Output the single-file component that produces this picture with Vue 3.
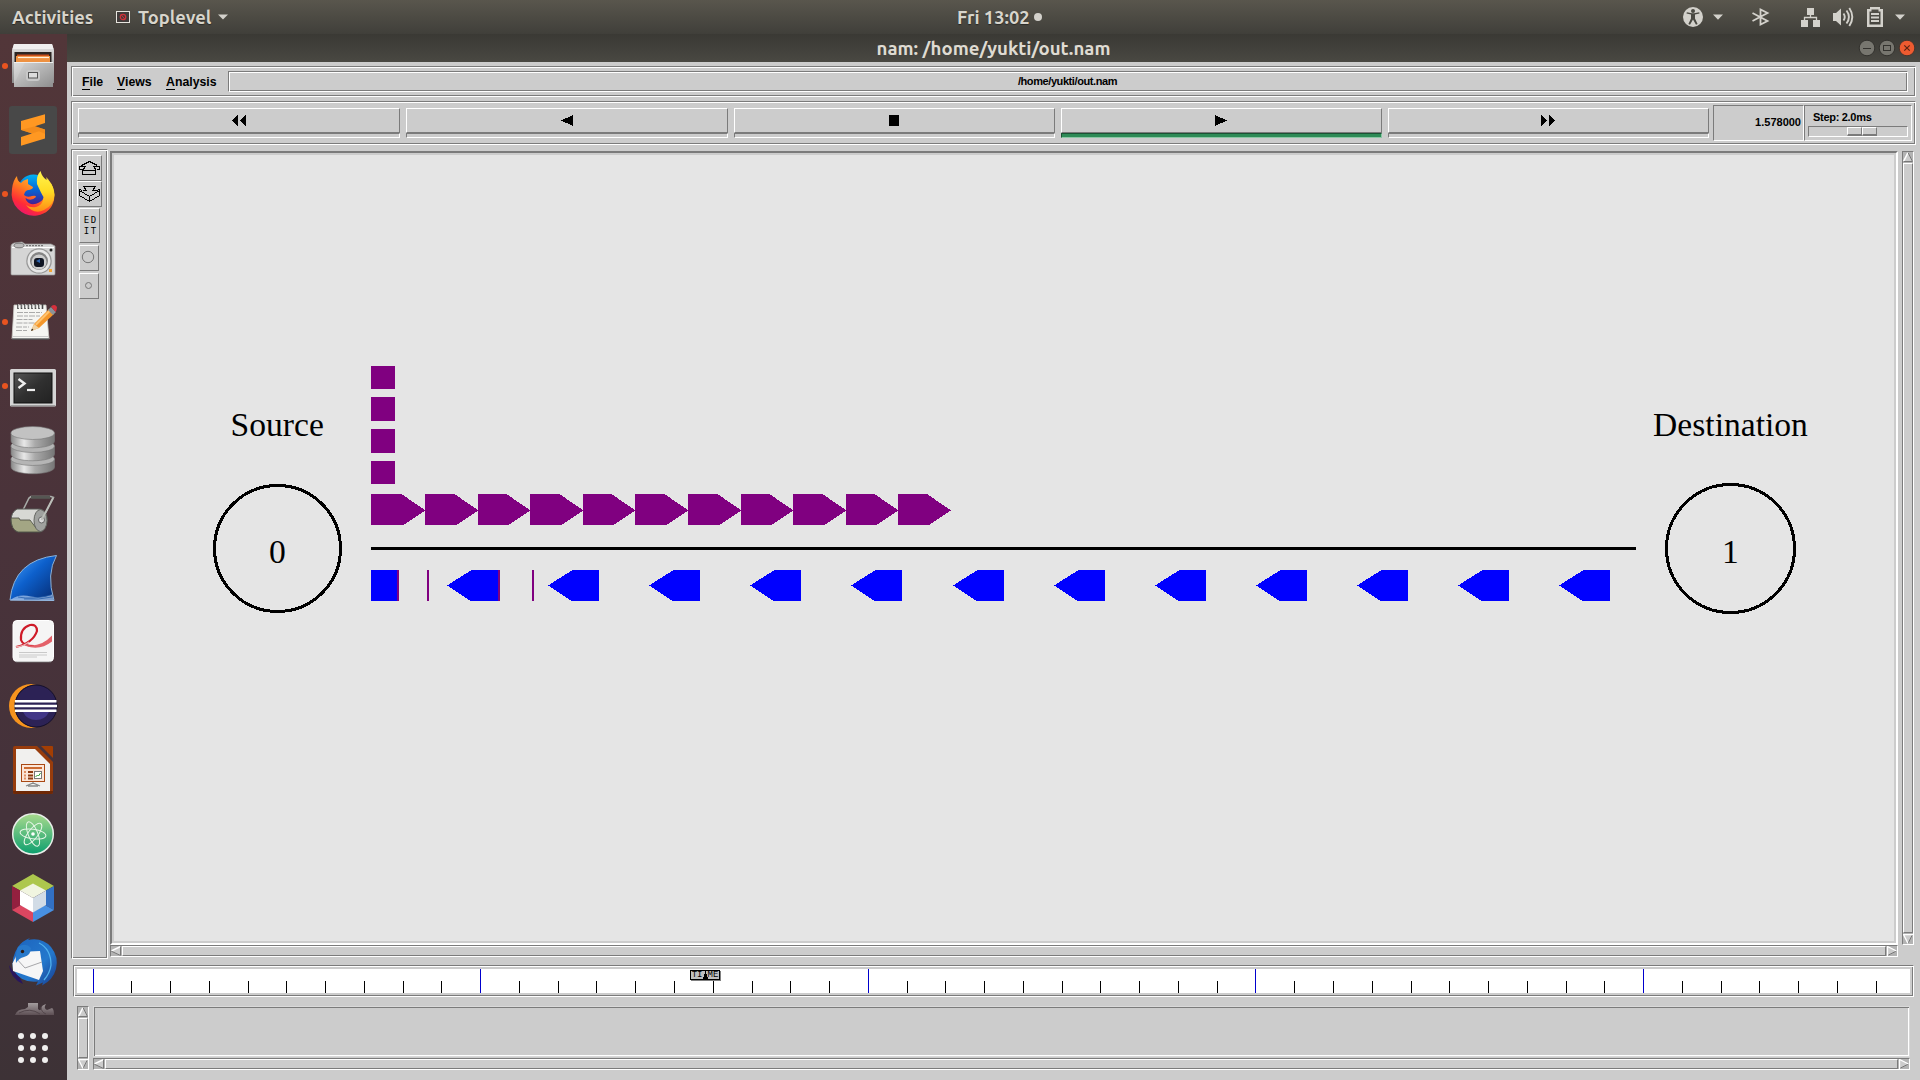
<script setup>
const purpleStarts = [371, 425, 478, 530, 583, 635, 688, 741, 793, 846, 898]
const forward = purpleStarts.map((x, i) => {
  const end = i < 10 ? purpleStarts[i + 1] + 0.5 : 951
  return `${x},494 ${end - 24},494 ${end},510.5 ${end - 22},525 ${x},525`
})
const backward = Array.from({ length: 12 }, (_, k) => {
  const r = Math.round(498 + 101.1 * k)
  const tip = r - 51
  return `${r},570 ${r - 26.5},570 ${tip},585.5 ${r - 27.5},601 ${r},601`
})
const queue = [[366, 23], [397, 24], [429, 24], [461, 23]]
const edges = [397, 427, 498, 532]
const ticks = Array.from({ length: 47 }, (_, i) => ({
  x: Math.floor(93 + 38.765 * i) - 77,
  major: i % 10 === 0,
}))
const controls = ['rewind', 'back', 'stop', 'play', 'forward']
const dots = [0, 1, 2, 3, 4, 5, 6, 7, 8]
</script>

<template>
  <div class="desktop">
    <header class="topbar">
      <div class="top-left">
        <span class="activities">Activities</span>
        <svg class="app-icon" width="14" height="12" viewBox="0 0 14 12">
          <rect x=".5" y=".5" width="13" height="11" fill="#413c3b" stroke="#e6e4de" />
          <circle cx="7" cy="6" r="2.7" fill="none" stroke="#d0323b" stroke-width="1.3" />
          <path d="M5 3.6l4 4.8" stroke="#d0323b" />
        </svg>
        <span class="toplevel">Toplevel</span>
        <svg width="10" height="6" viewBox="0 0 10 6"><path d="M0 .5h10L5 5.5z" fill="#d3d1cb" /></svg>
      </div>
      <div class="clock"><span>Fri 13:02</span><i></i></div>
      <svg class="tray" width="240" height="34" viewBox="1680 0 240 34" fill="#d3d1cb">
        <circle cx="1693" cy="17" r="10" />
        <circle cx="1693" cy="11" r="2" fill="#4a4942" />
        <path d="M1686.5 13.6l4.5 1v4l-2.6 5.4 1.6.8 3-5.2 3 5.2 1.6-.8-2.6-5.400v-4l4.500-1-.3-1.300-5.200.9h-2l-5.200-.9z" fill="#4a4942" />
        <path d="M1713 14.500h10l-5 5.200zM1895 14.500h10l-5 5.200z" />
        <g fill="none" stroke="#d3d1cb" stroke-width="1.800">
          <path d="M1752.500 13l15 8-7 3.500v-15l7 3.500-15 8" />
        </g>
        <path d="M1807 8h7v7h-7zM1801 20h7v7h-7zM1813 20h7v7h-7z" />
        <path d="M1810.500 14v3.500M1804.500 20v-2.500h12v2.500" fill="none" stroke="#d3d1cb" stroke-width="1.300" />
        <path d="M1833 13h3l5-4.500v17l-5-4.500h-3z" />
        <g fill="none" stroke="#d3d1cb" stroke-width="1.900">
          <path d="M1843.500 13.500q2.500 3.500 0 7M1846.500 10.500q4.800 6.500 0 13M1849.300 8q6 9 0 18" />
        </g>
        <path fill-rule="evenodd" d="M1867 9h3V7h10v2h3v18h-16zM1869.500 11.500v13h11v-13h-2v-2h-7v2z" />
        <path d="M1871 13h8v2h-8zM1871 16.500h8v2h-8zM1871 20h8v2h-8z" />
      </svg>
    </header>

    <div class="main">
      <aside class="dock">
        <div class="cell">
          <b></b>
          <svg viewBox="0 0 67 64">
            <defs>
              <linearGradient id="steel" x1="0" y1="0" x2="0" y2="1"><stop offset="0" stop-color="#e4e4e4" /><stop offset="1" stop-color="#8c8c8c" /></linearGradient>
              <linearGradient id="drawer" x1="0" y1="0" x2="1" y2="1"><stop offset="0" stop-color="#d9d9d9" /><stop offset="1" stop-color="#8e8e8e" /></linearGradient>
            </defs>
            <path d="M14 10h38l2 6v33h-42v-33z" fill="url(#steel)" />
            <path d="M14 10h38l1.500 5h-41z" fill="#efefef" />
            <path d="M14.500 18h37v10h-37z" fill="#2c2522" />
            <path d="M17 20.500h32v2H17z" fill="#c9501c" /><path d="M16 22h34v6H16z" fill="#ee9141" /><path d="M18 23.500h31" stroke="#fff2df" stroke-width="1.200" />
            <path d="M14 28h39v25H14z" fill="url(#drawer)" /><path d="M14 28.500h39" stroke="#eee" />
            <path d="M14 50L25 28h-11z" fill="#fff" opacity=".13" />
            <rect x="26" y="36" width="14" height="11" rx="3" fill="#c8c8c8" />
            <rect x="28.500" y="38.500" width="9" height="5.500" fill="#ddd" stroke="#555" />
          </svg>
        </div>
        <div class="cell">
          <svg viewBox="0 0 67 64">
            <rect x="9" y="8" width="48" height="48" rx="3" fill="#484848" />
            <path d="M21 23L45 16.300V25L35 28.300 45 31.500V40.500L21 47.700V39L32 35.500 21 32z" fill="#ff9822" />
            <path d="M21 31.800L32 35.500 39 33.300 45 36V31.500L35 28.300z" fill="#e98417" opacity=".55" />
          </svg>
        </div>
        <div class="cell">
          <b></b>
          <svg viewBox="0 0 67 64">
            <defs>
              <linearGradient id="fox" x1=".8" y1="0" x2=".2" y2="1"><stop offset="0" stop-color="#ffd43c" /><stop offset=".45" stop-color="#ff7b1f" /><stop offset=".75" stop-color="#ff2b37" /><stop offset="1" stop-color="#e5107e" /></linearGradient>
              <linearGradient id="globe" x1="0" y1="0" x2="0" y2="1"><stop offset="0" stop-color="#00b3f4" /><stop offset=".5" stop-color="#0763d4" /><stop offset="1" stop-color="#4a1a8c" /></linearGradient>
              <linearGradient id="flame" x1="0" y1="0" x2="0" y2="1"><stop offset="0" stop-color="#fff44f" /><stop offset=".5" stop-color="#ffdc24" /><stop offset="1" stop-color="#ff8a16" /></linearGradient>
            </defs>
            <circle cx="33.500" cy="28" r="15.500" fill="url(#globe)" />
            <path d="M17 14Q13 18 12 27Q10 39 18 47Q26 55 37 53.500Q51 51 54 38Q56 27 48 17Q50 28 44 36Q39 43 31 42Q26 40 25.500 36Q31 40 36 35Q36 33 32 34Q27 36 24 33Q25 28 29 28Q33 27 33 25L28 22V17Q23 18 21 21Q17 19 17 14z" fill="url(#fox)" />
            <path d="M40.500 9Q36 14 37 22Q41 31 43.500 35Q43 43 36 45Q30 46 26 43Q34 53 44 48Q54 43 54.500 33Q54 24 49 19L46.500 15V18Q42 15 40.500 9z" fill="url(#flame)" />
          </svg>
        </div>
        <div class="cell">
          <svg viewBox="0 0 67 64">
            <path d="M14 17l8-1 3 2h26l4 2v28q0 1-1 1H12q-1 0-1-1V20q0-2 3-3z" fill="#d5d5d5" stroke="#999" stroke-width=".7" />
            <path d="M12 21h42v1H12z" fill="#fff" /><ellipse cx="19" cy="19.500" rx="5" ry="2.300" fill="#bbb" stroke="#777" /><path d="M26 19.700h17" stroke="#777" stroke-dasharray="2 1" stroke-width="1.200" />
            <circle cx="39" cy="35" r="12.800" fill="#999" /><circle cx="39" cy="35" r="11.500" fill="#e7e7e7" /><circle cx="39" cy="35" r="9" fill="#858585" /><circle cx="39" cy="36" r="7.500" fill="#ccc" />
            <rect x="34" y="32" width="10" height="9" rx="3" fill="#101522" /><path d="M36 35l4-2v4z" fill="#2c63ae" />
            <circle cx="51" cy="24" r="1.500" fill="#222" /><path d="M49 43h3v3h-3z" fill="#f4a534" />
          </svg>
        </div>
        <div class="cell">
          <b></b>
          <svg viewBox="0 0 67 64">
            <path d="M14 15h32l3 34H12z" fill="#f5f5f2" stroke="#c8c8c3" stroke-width=".8" /><path d="M12 49h37" stroke="#22272b" stroke-width="1" /><path d="M12.500 46.500h36" stroke="#ccc" />
            <path d="M18 14v5M21.500 14v5M25 14v5M28.500 14v5M32 14v5M35.500 14v5M39 14v5M42.500 14v5" stroke="#444" stroke-width="1.600" /><path d="M18.700 14v4M22.200 14v4M25.700 14v4M29.200 14v4M32.700 14v4M36.200 14v4M39.700 14v4" stroke="#eee" stroke-width=".8" />
            <path d="M17 22.500h25M17 26h23M16.500 29.500h16M16.500 33h21M16 37h13M16 40.500h12" stroke="#aaa" stroke-dasharray="6 1 4 1" />
            <path d="M31 41l3-7L49 19l5 5-15 14z" fill="#f4962a" /><path d="M35 34l15-15 1.500 1.500-15 15z" fill="#ffc36f" /><path d="M31 41l3-7 5 4z" fill="#efd2a4" /><path d="M31 41l1-2.500 1.500 1.500z" fill="#222" /><path d="M48 20l3-3 5 5-3 3z" fill="#8a9298" /><path d="M51 16.500q4-3 6 .5 0 3-1.500 5z" fill="#d6303c" />
          </svg>
        </div>
        <div class="cell">
          <b></b>
          <svg viewBox="0 0 67 64">
            <defs><linearGradient id="term" x1="0" y1="0" x2="1" y2="1"><stop offset="0" stop-color="#555" /><stop offset=".5" stop-color="#303030" /><stop offset="1" stop-color="#222" /></linearGradient></defs>
            <rect x="10" y="15" width="46" height="37.500" rx="1.500" fill="#d5d5d5" /><path d="M11 51.800h44" stroke="#888" />
            <rect x="14" y="19" width="38" height="30" fill="url(#term)" stroke="#111" />
            <path d="M18.500 25l6 4.500-6 4.500" fill="none" stroke="#eee" stroke-width="2.400" /><path d="M27 36h8" stroke="#eee" stroke-width="2.200" />
          </svg>
        </div>
        <div class="cell">
          <svg viewBox="0 0 67 64">
            <defs><linearGradient id="disk"><stop offset="0" stop-color="#8a8a8a" /><stop offset=".3" stop-color="#e8e8e8" /><stop offset=".55" stop-color="#aaa" /><stop offset="1" stop-color="#777" /></linearGradient></defs>
            <g stroke="#777" stroke-width=".6">
              <path d="M11 41v8c0 9 43.500 9 43.500 0v-8z" fill="url(#disk)" /><ellipse cx="32.700" cy="41" rx="21.800" ry="6.500" fill="#b5b5b5" />
              <path d="M11 28v8c0 9 43.500 9 43.500 0v-8z" fill="url(#disk)" /><ellipse cx="32.700" cy="28" rx="21.800" ry="6.500" fill="#b5b5b5" />
              <path d="M11 15v8c0 9 43.500 9 43.500 0v-8z" fill="url(#disk)" /><ellipse cx="32.700" cy="15" rx="21.800" ry="6.500" fill="#c2c2c2" />
            </g>
          </svg>
        </div>
        <div class="cell">
          <svg viewBox="0 0 67 64">
            <path d="M23 28l6-12 2-1.500h20l2.500 1L42 38" fill="none" stroke="#a6aaa6" stroke-width="1.600" /><path d="M31 15.300h19" stroke="#555753" stroke-width="3" />
            <path d="M17 27h23q8 3 7 12-1 8-7 11H18q-6-2-7-11 0-9 6-12z" fill="#d7d8d4" stroke="#555753" />
            <path d="M11 36h8l1 2h10l3 4q3 5 8 8H18q-7-2-7-14z" fill="#a3a684" stroke="#45473d" stroke-width=".8" />
            <ellipse cx="40.500" cy="38.500" rx="6.500" ry="11" fill="#a0a29f" stroke="#62645f" /><circle cx="41.500" cy="38" r="3" fill="#ddd" stroke="#666" />
            <path d="M41.500 38L53 16" stroke="#bcbfb9" stroke-width="1.800" />
          </svg>
        </div>
        <div class="cell">
          <svg viewBox="0 0 67 64">
            <defs><linearGradient id="fin" x1="0" y1="0" x2="1" y2="1"><stop offset="0" stop-color="#4aa5ff" /><stop offset=".45" stop-color="#0d60cc" /><stop offset="1" stop-color="#06296e" /></linearGradient></defs>
            <path d="M10 54Q14 14 56.500 9.500Q46 28 54 54.500z" fill="url(#fin)" stroke="#8ab3dc" />
            <path d="M11 53.500q8-6 20-3 12 2 21-2l1.500 6H10.500z" fill="#aecbf0" opacity=".7" /><path d="M18 51q14 3 33-2M24 53q15 1 28-2" stroke="#1b57a6" fill="none" stroke-width=".7" />
          </svg>
        </div>
        <div class="cell">
          <svg viewBox="0 0 67 64">
            <rect x="13" y="10.500" width="40.500" height="41" rx="4" fill="#f5f5f5" stroke="#fff" /><path d="M16 52h35" stroke="#777" stroke-width=".8" />
            <path d="M16 37Q33 33 37 21Q37 14 30 15Q20 18 21 30Q23 36 34 36" fill="none" stroke="#cf1b29" stroke-width="2.200" /><path d="M24 34.500q16 4 28-9v6Q40 41 26 36z" fill="#e4626a" /><path d="M16 37q8-1 13-5" stroke="#ecb0b2" stroke-width="1.500" fill="none" />
            <path d="M19 42.500h28M19 45h28M19 47h18" stroke="#c9c9c9" stroke-width="1.100" />
          </svg>
        </div>
        <div class="cell">
          <svg viewBox="0 0 67 64">
            <circle cx="31" cy="32" r="22" fill="#f7941e" /><circle cx="36" cy="32" r="21.500" fill="#43303a" /><circle cx="36" cy="32" r="21" fill="#2c2255" stroke="#15102c" />
            <path d="M23 38h26q-4 8-13 8t-13-8z" fill="#413687" />
            <path d="M15 27.300h41.500M14.500 32h42.500M15 36.800h41.500" stroke="#fff" stroke-width="2.400" />
          </svg>
        </div>
        <div class="cell">
          <svg viewBox="0 0 67 64">
            <path d="M15 8h22l16 16v30q0 2-2 2H15q-2 0-2-2V10q0-2 2-2z" fill="#983c0c" /><path d="M13 53h40v1q0 2-2 2H15q-2 0-2-2z" fill="#6e2806" /><path d="M16 11h19l15 15v27H16z" fill="#f1f0ee" />
            <path d="M41 8h11q1 0 1 1v11z" fill="#a33e03" />
            <rect x="21.500" y="26.500" width="23" height="17" fill="#fbe5d7" stroke="#a94813" /><path d="M24 30h18" stroke="#cc6a31" stroke-width="2" /><path d="M24 34h2M24 37.500h2M24 40.500h2" stroke="#e09064" stroke-width="2" /><path d="M28 34h5M28 37.500h5M28 40.500h5" stroke="#8d3a11" stroke-width="2" />
            <rect x="34.500" y="33.500" width="7" height="7" fill="#fff" stroke="#777" /><path d="M35.500 39l2-2 1 1 2-3" stroke="#2d9b2b" fill="none" /><path d="M33 44v2M26 48l7-3 7 3M28 48h10" stroke="#888" fill="none" stroke-width="1.300" />
          </svg>
        </div>
        <div class="cell">
          <svg viewBox="0 0 67 64">
            <defs><linearGradient id="atom" x1="0" y1="0" x2="0" y2="1"><stop offset="0" stop-color="#a8da8d" /><stop offset="1" stop-color="#0c9f6e" /></linearGradient></defs>
            <circle cx="33" cy="32" r="20.300" fill="url(#atom)" stroke="#e9eee9" stroke-width="1.500" />
            <g fill="none" stroke="#e6f5e6" stroke-width="1"><ellipse cx="33" cy="32" rx="13" ry="4.800" transform="rotate(8 33 32)" /><ellipse cx="33" cy="32" rx="13" ry="4.800" transform="rotate(68 33 32)" /><ellipse cx="33" cy="32" rx="13" ry="4.800" transform="rotate(128 33 32)" /></g>
            <circle cx="33" cy="32" r="1.800" fill="#fff" />
          </svg>
        </div>
        <div class="cell">
          <svg viewBox="0 0 67 64">
            <path d="M33 8l21 12-9 5-12-7-12 7-9-5z" fill="#adc74d" /><path d="M12 20l9 5v14l-9 5z" fill="#93203f" /><path d="M54 20l-9 5v14l9 5z" fill="#3270c4" /><path d="M12 44l9-5 12 7v10z" fill="#da4660" /><path d="M54 44l-9-5-12 7v10z" fill="#4890e2" />
            <path d="M33 17.500l13 7-13 7.500-13-7.500z" fill="#f1f5e0" /><path d="M20 24.500L33 32v14.500L20 39z" fill="#fff" /><path d="M46 24.500L33 32v14.500L46 39z" fill="#d2dce6" />
          </svg>
        </div>
        <div class="cell">
          <svg viewBox="0 0 67 64">
            <defs><linearGradient id="bird" x1="0" y1="0" x2="1" y2="1"><stop offset="0" stop-color="#1c63bd" /><stop offset=".6" stop-color="#2478cc" /><stop offset="1" stop-color="#173a8c" /></linearGradient></defs>
            <path d="M18 17q4-6 12-9l-2 2q14-3 23 7 8 10 5 22-3 11-14 16.500l1-3-7 3 2-4q-17 2-25-12-2-12 5-22.500z" fill="url(#bird)" />
            <path d="M9 35q1 13 14 19l-3-6-8-8z" fill="#28155f" />
            <path d="M12.500 33.500L18 22l22-1 3 20-4 9-26-9z" fill="#f6f6f6" /><path d="M15 27l10 11 17-6" fill="none" stroke="#a7a7aa" />
            <path d="M18 17q8-5 13 1 0 7-7 9-5 1-8 6-1-10 2-16z" fill="#2879cb" /><circle cx="22.500" cy="21.500" r="1.700" fill="#2c1c17" /><path d="M39 13q12 6 12 22-1 8-7 15" stroke="#51b1ec" stroke-width="1.300" fill="none" />
          </svg>
        </div>
        <div class="hidden-app">
          <svg width="67" height="24" viewBox="0 0 67 24">
            <defs><linearGradient id="fade" x1="0" y1="0" x2="0" y2="1"><stop offset="0" stop-color="#a39c9e" /><stop offset="1" stop-color="#5d4f54" /></linearGradient></defs>
            <path d="M15 21q2-6 10-6l3-2V9h10v6q3 3 3-1 1-3 5-4-3 4 1 6l5-2q2 1 2 7z" fill="url(#fade)" /><path d="M19 19q11-6 21 1M41 13q0 5 5 7" stroke="#53464b" fill="none" />
          </svg>
        </div>
        <div class="apps"><i v-for="d in dots" :key="d"></i></div>
      </aside>

      <section class="window">
        <div class="titlebar">
          <span class="title">nam: /home/yukti/out.nam</span>
          <svg class="winbtns" width="60" height="28" viewBox="1856 34 60 28">
            <circle cx="1867" cy="48" r="7.800" fill="#77766f" stroke="#33322e" /><path d="M1863 48.500h8" stroke="#33322e" />
            <circle cx="1887" cy="48" r="7.800" fill="#77766f" stroke="#33322e" /><rect x="1883.500" y="45.500" width="7" height="5" fill="none" stroke="#33322e" />
            <circle cx="1907" cy="48" r="7.800" fill="#ee5b30" stroke="#47352d" /><path d="M1904.300 45.300l5.400 5.400M1909.700 45.300l-5.400 5.400" stroke="#5b2414" stroke-width="1.200" />
          </svg>
        </div>

        <nav class="menubar groove">
          <span class="m1"><u>F</u>ile</span><span class="m2"><u>V</u>iews</span><span class="m3"><u>A</u>nalysis</span>
          <div class="path groove"><span>/home/yukti/out.nam</span></div>
        </nav>

        <div class="toolbar groove">
          <div class="controls">
            <div v-for="c in controls" :key="c" class="control">
              <button :class="c">
                <svg width="16" height="11" viewBox="0 0 16 11" shape-rendering="crispEdges">
                  <path v-if="c === 'rewind'" d="M7 0v11L1 5.500zM15 0v11L9 5.500z" />
                  <path v-if="c === 'back'" d="M14 0v11L2 5.500z" />
                  <path v-if="c === 'stop'" d="M3 0h10v11H3z" />
                  <path v-if="c === 'play'" d="M2 0v11L14 5.500z" />
                  <path v-if="c === 'forward'" d="M1 0v11L7 5.500zM9 0v11l6-5.500z" />
                </svg>
              </button>
              <div class="strip" :class="{ active: c === 'play' }"></div>
            </div>
          </div>
          <div class="time sunken"><span>1.578000</span></div>
          <div class="step sunken">
            <span>Step: 2.0ms</span>
            <div class="trough sunken"><div class="knob"><i></i><i></i></div></div>
          </div>
        </div>

        <div class="work">
          <div class="tools groove">
            <div class="tool t1"><svg width="23" height="24" viewBox="0 0 23 24" shape-rendering="crispEdges"><path d="M3.500 9.500L11.500 5.500l8 4M7.500 10.500h-6v3h3M15.500 10.500h6v3h-3M4.500 14.500l3-4M18.500 14.500l-3-4M4.500 14.500h13v4h-13z" /></svg></div>
            <div class="tool t1"><svg width="23" height="24" viewBox="0 0 23 24" shape-rendering="crispEdges"><path d="M5.500 4.500h12M5.500 4.500l3 4h-4M17.500 4.500l-3 4h4M4.500 8.500l-3-1v6l10 6 10-6v-6l-3 1M1.500 8.500l10 6 10-6M11.500 14.500v5" /></svg></div>
            <div class="tool t2"><span>E</span><span>D</span><span>I</span><span>T</span></div>
            <div class="tool t3"><svg width="18" height="24" viewBox="0 0 18 24"><circle cx="8" cy="11" r="5.700" /></svg></div>
            <div class="tool t4"><svg width="18" height="24" viewBox="0 0 18 24"><circle cx="8.500" cy="11.500" r="3" /></svg></div>
          </div>

          <div class="view">
            <div class="canvas">
              <svg width="1780" height="786" viewBox="114 155 1780 786">
                <g fill="#800080" shape-rendering="crispEdges">
                  <rect v-for="q in queue" :key="q[0]" x="371" :y="q[0]" width="24" :height="q[1]" />
                  <polygon v-for="p in forward" :key="p" :points="p" />
                </g>
                <rect x="371" y="547" width="1265" height="3" />
                <g fill="#00f" shape-rendering="crispEdges">
                  <rect x="371" y="570" width="26" height="31" />
                  <polygon v-for="p in backward" :key="p" :points="p" />
                </g>
                <rect v-for="e in edges" :key="e" :x="e" y="570" width="2" height="31" fill="#800080" />
                <g fill="none" stroke="#000" stroke-width="3" shape-rendering="crispEdges">
                  <circle cx="277.500" cy="548.500" r="63" /><circle cx="1730.500" cy="548.500" r="64" />
                </g>
                <g class="labels" text-anchor="middle">
                  <text x="277.200" y="436">Source</text><text x="1730.500" y="436">Destination</text>
                  <text x="277.500" y="563">0</text><text x="1730.500" y="563">1</text>
                </g>
              </svg>
            </div>
            <div class="hbar">
              <svg width="10" height="10" viewBox="0 0 10 10"><path d="M10 0v10L0 5" fill="#ccc" /><path d="M0 5L9.500 .5" stroke="#fff" stroke-width="1.500" /><path d="M0 5l9.500 4.500v-9" fill="none" stroke="#777" /></svg>
              <div class="thumb"></div>
              <svg width="10" height="10" viewBox="0 0 10 10"><path d="M.5 0v10L10 5z" fill="#ccc" /><path d="M.5 9.500L9.500 5" stroke="#777" /><path d="M.5 10V.5L9.500 5" fill="none" stroke="#fff" stroke-width="1.300" /></svg>
            </div>
          </div>

          <div class="vbar">
            <svg width="10" height="10" viewBox="0 0 10 10"><path d="M0 10L5 0l5 10" fill="#ccc" /><path d="M.5 9.500L5 .5" stroke="#fff" stroke-width="1.500" /><path d="M5 .5l4.500 9H.5" fill="none" stroke="#777" /></svg>
            <div class="thumb"></div>
            <svg width="10" height="10" viewBox="0 0 10 10"><path d="M0 .5h10L5 10z" fill="#ccc" /><path d="M9.500 .5L5 9.500" stroke="#777" /><path d="M10 .5H.5L5 9.500" fill="none" stroke="#fff" stroke-width="1.300" /></svg>
          </div>
        </div>

        <div class="timeline groove">
          <svg width="1833" height="24" viewBox="0 0 1833 24" shape-rendering="crispEdges">
            <rect v-for="t in ticks" :key="t.x" :x="t.x" :y="t.major ? 0 : 12" width="1" :height="t.major ? 24 : 12" :fill="t.major ? '#0000cd' : '#000'" />
          </svg>
          <div class="marker"><span>TI</span><svg width="5" height="9" viewBox="0 0 5 9" shape-rendering="crispEdges"><path d="M2 0h1v3h1v3h1v3H0V6h1V3h1z" /></svg><span>ME</span></div>
        </div>

        <div class="log">
          <div class="vbar">
            <svg width="10" height="10" viewBox="0 0 10 10"><path d="M0 10L5 0l5 10" fill="#ccc" /><path d="M.5 9.500L5 .5" stroke="#fff" stroke-width="1.500" /><path d="M5 .5l4.500 9H.5" fill="none" stroke="#777" /></svg>
            <div class="thumb"></div>
            <svg width="10" height="10" viewBox="0 0 10 10"><path d="M0 .5h10L5 10z" fill="#ccc" /><path d="M9.500 .5L5 9.500" stroke="#777" /><path d="M10 .5H.5L5 9.500" fill="none" stroke="#fff" stroke-width="1.300" /></svg>
          </div>
          <div class="logview">
            <div class="logtext"></div>
            <div class="hbar">
              <svg width="10" height="10" viewBox="0 0 10 10"><path d="M10 0v10L0 5" fill="#ccc" /><path d="M0 5L9.500 .5" stroke="#fff" stroke-width="1.500" /><path d="M0 5l9.500 4.500v-9" fill="none" stroke="#777" /></svg>
              <div class="thumb"></div>
              <svg width="10" height="10" viewBox="0 0 10 10"><path d="M.5 0v10L10 5z" fill="#ccc" /><path d="M.5 9.500L9.500 5" stroke="#777" /><path d="M.5 10V.5L9.500 5" fill="none" stroke="#fff" stroke-width="1.300" /></svg>
            </div>
          </div>
        </div>
      </section>
    </div>
  </div>
</template>

<style>
body { margin: 0; overflow: hidden; }
</style>

<style scoped>
* { box-sizing: border-box; }
svg { display: block; flex: none; }
.desktop { width: 1920px; height: 1080px; display: flex; flex-direction: column; overflow: hidden; background: #ccc; font-family: "Liberation Sans", Arial, sans-serif; }
.topbar { height: 34px; flex: none; display: flex; align-items: center; background: linear-gradient(#59564d, #403f3a); color: #d8d5cc; font: 700 18.300px/34px Ubuntu, "Noto Sans", sans-serif; text-shadow: 0 1px 1px #2a2926; }
.top-left { display: flex; align-items: center; padding-left: 12px; width: 957px; }
.activities { width: 104px; }
.toplevel { margin-left: 8px; width: 80px; white-space: nowrap; }
.clock { display: flex; align-items: center; gap: 4px; white-space: nowrap; }
.clock span { width: 73px; }
.clock i { width: 8px; height: 8px; border-radius: 50%; background: #d3d1cb; }
.tray { margin-left: auto; }

.main { flex: 1; display: flex; min-height: 0; }
.dock { width: 67px; flex: none; background: linear-gradient(#523639, #4a333a 45%, #44323a 75%, #3d3236); display: flex; flex-direction: column; }
.cell { height: 64px; flex: none; position: relative; }
.cell svg { width: 67px; height: 64px; }
.cell b { position: absolute; left: 2px; top: 29px; width: 6px; height: 6px; border-radius: 50%; background: #e95420; }
.hidden-app { height: 39px; }
.apps { display: grid; grid-template-columns: repeat(3, 6px); gap: 6px; margin-left: 18px; }
.apps i { width: 6px; height: 6px; border-radius: 50%; background: #f0efee; }

.window { flex: 1; display: flex; flex-direction: column; background: #ccc; min-width: 0; }
.titlebar { height: 28px; flex: none; display: flex; justify-content: center; position: relative; background: linear-gradient(#3a3934, #494842); color: #dfdbd2; font: 700 18.600px/29px Ubuntu, "Noto Sans", sans-serif; }
.winbtns { position: absolute; right: 4px; top: 0; }

.groove { border: 1px solid; border-color: #7b7b7b #fff #fff #7b7b7b; box-shadow: inset 1px 1px #fff, inset -1px -1px #7b7b7b; }
.sunken { border: 1px solid; border-color: #7b7b7b #fff #fff #7b7b7b; }

.menubar { height: 31px; flex: none; margin: 4px 4px 0; display: flex; align-items: center; padding: 0 7px 0 10px; font-weight: bold; font-size: 12.300px; color: #000; }
.menubar u { text-decoration: none; border-bottom: 1px solid #000; }
.m1 { width: 35px; } .m2 { width: 49px; } .m3 { width: 62px; }
.path { flex: 1; height: 21px; display: flex; align-items: center; justify-content: center; font-size: 11px; letter-spacing: -0.410px; padding: 0 1px 2px 0; }

.toolbar { height: 44px; flex: none; margin: 4px 4px 0; display: flex; padding: 3px 3px 3px 6px; }
.controls { width: 1631px; display: grid; grid-template-columns: 322px 322px 321px 321px 321px; gap: 6px; margin-right: 4px; padding-top: 3px; }
button { display: flex; width: 100%; height: 25px; margin: 0; padding: 0 0 1px; border: 1px solid; border-color: #fff #7b7b7b #7b7b7b #fff; background: #ccc; align-items: center; justify-content: center; border-radius: 0; }
button.stop, button.play, button.forward { padding-right: 1px; }
.strip { height: 5px; border: 1px solid; border-color: #7b7b7b #fff #fff #7b7b7b; background: #ccc; }
.strip.active { background: #2e8b57; border-color: #1b5334 #8cc8a5 #8cc8a5 #1b5334; }
.time { width: 91px; height: 36px; display: flex; justify-content: flex-end; align-items: center; padding: 0 2px 2px 0; font: bold 11px/12px "Liberation Sans", sans-serif; }
.step { width: 108px; height: 36px; padding: 5px 3px 0; font: bold 11px/13px "Liberation Sans", sans-serif; letter-spacing: -0.300px; }
.step span { display: block; padding-left: 5px; height: 15px; }
.trough { width: 100px; height: 11px; padding-left: 38px; }
.knob { width: 30px; height: 9px; display: flex; }
.knob i { flex: 1; border: solid; border-width: 1px 1px 2px 1px; border-color: #fff #7b7b7b #7b7b7b #fff; }

.work { height: 810px; flex: none; display: flex; margin: 4px 6px 0 4px; }
.tools { width: 37px; padding: 5px 0 0 5px; display: flex; flex-direction: column; }
.tool { border: 1px solid; border-color: #fff #7b7b7b #7b7b7b #fff; flex: none; }
.tool svg { fill: none; stroke: #000; }
.t1 { width: 25px; height: 26px; }
.t2 { width: 21px; height: 35px; margin: 1px 0 0 2px; display: grid; grid-template-columns: 7px 7px; grid-auto-rows: 11px; justify-content: center; padding: 6px 0 0 1px; font: 9px/11px "DejaVu Sans Mono", monospace; text-align: center; color: #000; }
.t3, .t4 { width: 20px; height: 26px; margin: 2px 0 0 2px; }
.t3 svg, .t4 svg { stroke: #777; }
.view { width: 1788px; margin: 2px 4px 0 2px; display: flex; flex-direction: column; }
.canvas { height: 794px; border: 2px solid; border-color: #7b7b7b #fff #fff #7b7b7b; padding: 2px; flex: none; }
.canvas svg { background: #e5e5e5; }
.labels { font: 33.600px "Liberation Serif", "Times New Roman", serif; }
.hbar { height: 12px; border: 1px solid; border-color: #7b7b7b #fff #fff #7b7b7b; background: #b3b3b3; display: flex; gap: 1px; flex: none; }
.vbar { width: 12px; height: 794px; margin-top: 2px; border: 1px solid; border-color: #7b7b7b #fff #fff #7b7b7b; background: #b3b3b3; display: flex; flex-direction: column; gap: 1px; flex: none; }
.thumb { flex: 1; background: #ccc; border: 1px solid; border-color: #fff #7b7b7b #7b7b7b #fff; }

.timeline { height: 32px; flex: none; margin: 6px 6px 0; padding: 3px; position: relative; }
.timeline > svg { background: #fff; }
.marker { position: absolute; left: 616px; top: 4px; width: 30px; height: 10px; border: 1px solid #000; background: #bfbfbf; box-shadow: 1px 1px #808080; color: #000; display: flex; justify-content: center; font: 9px/9px "Liberation Mono", monospace; }

.log { display: flex; height: 64px; margin: 9px 10px 0; }
.log .vbar { height: 64px; margin: 0 4px 0 0; }
.logview { flex: 1; display: flex; flex-direction: column; }
.logtext { height: 51px; margin-bottom: 1px; border: 1px solid #d9d9d9; box-shadow: inset 1px 1px #7b7b7b, inset -1px -1px #fff; }
</style>
